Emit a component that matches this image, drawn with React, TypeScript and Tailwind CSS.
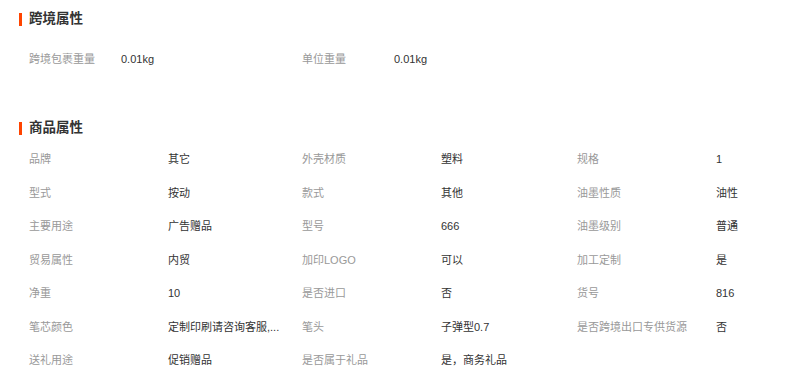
import React from 'react';

type Attr = { label: string; value: string };

const crossBorder: Attr[] = [
  { label: '跨境包裹重量', value: '0.01kg' },
  { label: '单位重量', value: '0.01kg' },
];

const productAttrs: Attr[] = [
  { label: '品牌', value: '其它' },
  { label: '外壳材质', value: '塑料' },
  { label: '规格', value: '1' },
  { label: '型式', value: '按动' },
  { label: '款式', value: '其他' },
  { label: '油墨性质', value: '油性' },
  { label: '主要用途', value: '广告赠品' },
  { label: '型号', value: '666' },
  { label: '油墨级别', value: '普通' },
  { label: '贸易属性', value: '内贸' },
  { label: '加印LOGO', value: '可以' },
  { label: '加工定制', value: '是' },
  { label: '净重', value: '10' },
  { label: '是否进口', value: '否' },
  { label: '货号', value: '816' },
  { label: '笔芯颜色', value: '定制印刷请咨询客服,...' },
  { label: '笔头', value: '子弹型0.7' },
  { label: '是否跨境出口专供货源', value: '否' },
  { label: '送礼用途', value: '促销赠品' },
  { label: '是否属于礼品', value: '是，商务礼品' },
];

const SectionTitle = ({ title }: { title: string }) => (
  <div className="flex items-center h-[14px]">
    <span className="w-[3px] h-[13px] bg-[#ff4400] mr-[7px]" />
    <span className="text-[13.5px] font-bold text-[#333] leading-none">{title}</span>
  </div>
);

const App: React.FC = () => {
  return (
    <div
      className="w-[800px] h-[382px] bg-white pl-[19px] pt-[12px] overflow-hidden"
      style={{ fontFamily: '"Liberation Sans", "Noto Sans CJK SC", sans-serif' }}
    >
      {/* 跨境属性 */}
      <SectionTitle title="跨境属性" />
      <div className="flex pl-[10px] mt-[26px] text-[11px] leading-[14px]">
        {crossBorder.map((a) => (
          <div key={a.label} className="flex w-[273px]">
            <span className="w-[92px] text-[#999]">{a.label}</span>
            <span className="text-[#333]">{a.value}</span>
          </div>
        ))}
      </div>

      {/* 商品属性 */}
      <div className="mt-[55px]">
        <SectionTitle title="商品属性" />
      </div>
      <div className="grid grid-cols-[273px_275px_200px] pl-[10px] mt-[17px] gap-y-[19.5px] text-[11px] leading-[14px]">
        {productAttrs.map((a) => (
          <div key={a.label} className="flex">
            <span className="w-[139px] shrink-0 text-[#999] whitespace-nowrap">{a.label}</span>
            <span className="text-[#333] whitespace-nowrap">{a.value}</span>
          </div>
        ))}
      </div>
    </div>
  );
};

export default App;
